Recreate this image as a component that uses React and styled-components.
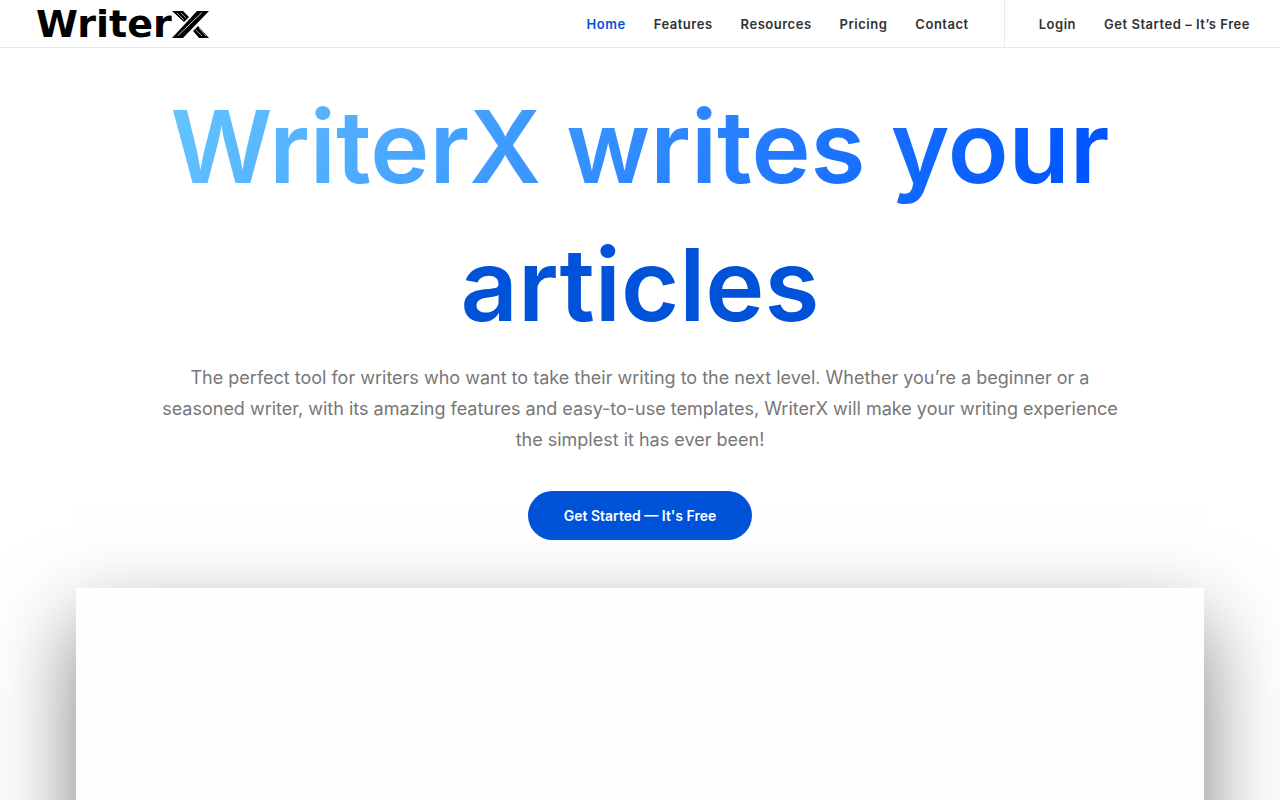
import React from "react";
import styled, { createGlobalStyle } from "styled-components";

const GlobalStyle = createGlobalStyle`
  *, *::before, *::after { box-sizing: border-box; }
  body {
    margin: 0;
    background: #fff;
    color: #303133;
    font-family: Inter, "Liberation Sans", sans-serif;
  }
`;

const Page = styled.div`
  overflow: hidden;
`;

const Header = styled.header`
  display: flex;
  align-items: stretch;
  justify-content: space-between;
  height: 48px;
  padding: 0 30px 0 36px;
  border-bottom: 1px solid #eaeaea;
`;

const Logo = styled.a`
  display: flex;
  align-items: center;
  color: #000;
  text-decoration: none;
`;

const LogoWord = styled.span`
  font: 700 38px/48px "DejaVu Sans", sans-serif;
`;

const LogoMark = styled.svg`
  display: block;
  width: 37px;
  height: 28px;
`;

const Menus = styled.div`
  display: flex;
`;

const Menu = styled.nav`
  display: flex;
  align-items: center;
  gap: 28px;

  & + & {
    margin-left: 35px;
    padding-left: 34px;
    border-left: 1px solid #eaeaea;
  }
`;

const MenuLink = styled.a`
  color: ${({ $active }) => ($active ? "#0052d9" : "#303133")};
  font-size: 13px;
  font-weight: 600;
  line-height: 20px;
  letter-spacing: 0.04em;
  text-decoration: none;
  white-space: nowrap;
`;

const Hero = styled.section`
  display: flex;
  flex-direction: column;
  align-items: center;
  max-width: 1008px;
  margin: 0 auto;
  padding: 30px 24px 48px;
  text-align: center;
`;

const Title = styled.h1`
  margin: 0;
  color: #0052d9;
  font-size: 100px;
  font-weight: 600;
  line-height: 138px;
`;

const Gradient = styled.span`
  background: linear-gradient(120deg, #66c6ff 0%, #0055ff 95%);
  background-clip: text;
  -webkit-background-clip: text;
  color: transparent;
`;

const Lead = styled.p`
  margin: 8px 0 36px;
  color: #777;
  font-size: 18px;
  line-height: 31px;
`;

const CallToAction = styled.button`
  height: 49px;
  padding: 0 36px;
  border: 0;
  border-radius: 25px;
  background: #0052d9;
  color: #fff;
  font: 600 14px/20px Inter, "Liberation Sans", sans-serif;
  cursor: pointer;
`;

const Preview = styled.section`
  height: 640px;
  margin: 0 76px;
  background: #fefefe;
  box-shadow: 0 36px 80px rgba(0, 0, 0, 0.5);
`;

const mainLinks = ["Home", "Features", "Resources", "Pricing", "Contact"];
const accountLinks = ["Login", "Get Started – It’s Free"];

export default function App() {
  return (
    <Page>
      <GlobalStyle />
      <Header>
        <Logo href="#" aria-label="WriterX">
          <LogoWord>Writer</LogoWord>
          <LogoMark viewBox="0 0 37 28" aria-hidden="true">
            <path d="M25 1H37L11 28H0Z M0 1H11L17 7L12 12Z M26 16L37 28H27L21 21Z" />
            <path
              d="M5 3L12 10M9 3L14 8M24 20L30 26M27 18L34 26"
              fill="none"
              stroke="#fff"
              strokeWidth="0.6"
            />
            <path
              d="M6 25.500L30 2.500"
              fill="none"
              stroke="#fff"
              strokeWidth="0.8"
            />
          </LogoMark>
        </Logo>
        <Menus>
          <Menu aria-label="Main">
            {mainLinks.map((label, i) => (
              <MenuLink key={label} href="#" $active={i === 0}>
                {label}
              </MenuLink>
            ))}
          </Menu>
          <Menu aria-label="Account">
            {accountLinks.map((label) => (
              <MenuLink key={label} href="#">
                {label}
              </MenuLink>
            ))}
          </Menu>
        </Menus>
      </Header>
      <main>
        <Hero>
          <Title>
            <Gradient>WriterX writes your</Gradient> articles
          </Title>
          <Lead>
            The perfect tool for writers who want to take their writing to the
            next level. Whether you’re a beginner or a seasoned writer, with its
            amazing features and easy-to-use templates, WriterX will make your
            writing experience the simplest it has ever been!
          </Lead>
          <CallToAction type="button">Get Started — It's Free</CallToAction>
        </Hero>
        <Preview aria-label="Preview" />
      </main>
    </Page>
  );
}
